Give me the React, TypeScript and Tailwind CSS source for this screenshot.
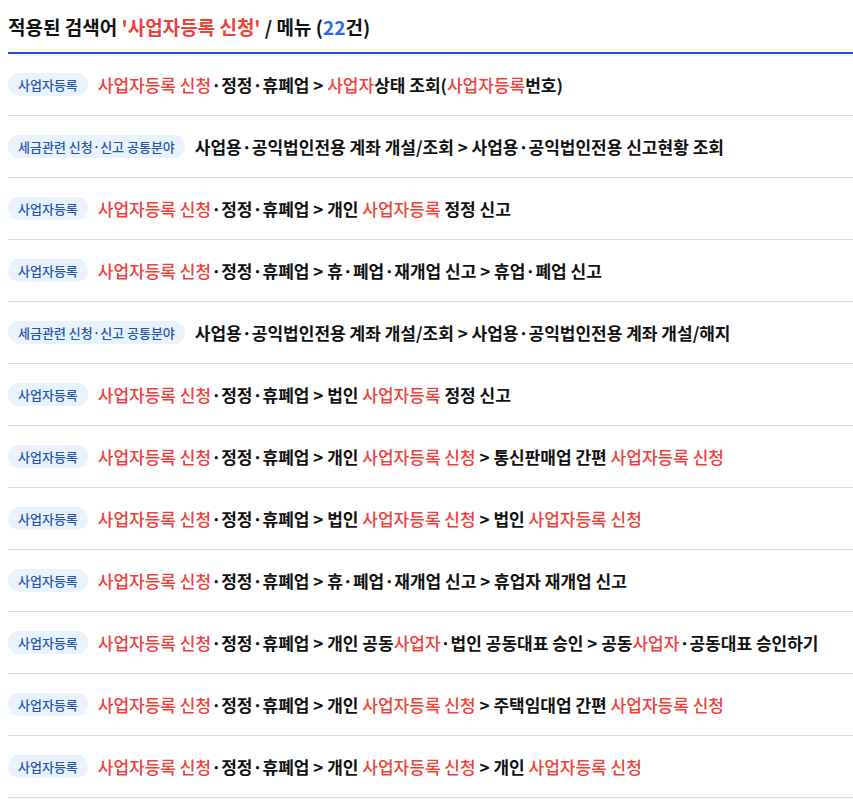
const A = '사업자등록';
const B = '세금관련 신청·신고 공통분야';

// [..] marks highlighted words
const rows: [string, string][] = [
  [A, '[사업자등록 신청]·정정·휴폐업 > [사업자]상태 조회([사업자등록]번호)'],
  [B, '사업용·공익법인전용 계좌 개설/조회 > 사업용·공익법인전용 신고현황 조회'],
  [A, '[사업자등록 신청]·정정·휴폐업 > 개인 [사업자등록] 정정 신고'],
  [A, '[사업자등록 신청]·정정·휴폐업 > 휴·폐업·재개업 신고 > 휴업·폐업 신고'],
  [B, '사업용·공익법인전용 계좌 개설/조회 > 사업용·공익법인전용 계좌 개설/해지'],
  [A, '[사업자등록 신청]·정정·휴폐업 > 법인 [사업자등록] 정정 신고'],
  [A, '[사업자등록 신청]·정정·휴폐업 > 개인 [사업자등록 신청] > 통신판매업 간편 [사업자등록 신청]'],
  [A, '[사업자등록 신청]·정정·휴폐업 > 법인 [사업자등록 신청] > 법인 [사업자등록 신청]'],
  [A, '[사업자등록 신청]·정정·휴폐업 > 휴·폐업·재개업 신고 > 휴업자 재개업 신고'],
  [A, '[사업자등록 신청]·정정·휴폐업 > 개인 공동[사업자]·법인 공동대표 승인 > 공동[사업자]·공동대표 승인하기'],
  [A, '[사업자등록 신청]·정정·휴폐업 > 개인 [사업자등록 신청] > 주택임대업 간편 [사업자등록 신청]'],
  [A, '[사업자등록 신청]·정정·휴폐업 > 개인 [사업자등록 신청] > 개인 [사업자등록 신청]'],
];

function Title({ text }: { text: string }) {
  const parts = text.split(/(\[[^\]]+\])/);
  return (
    <span className="text-[17px] font-semibold text-[#111]">
      {parts.map((p, i) =>
        p.startsWith('[') ? (
          <span key={i} className="text-[#f0403c] font-medium">{p.slice(1, -1)}</span>
        ) : (
          <span key={i}>{p}</span>
        )
      )}
    </span>
  );
}

export default function App() {
  return (
    <div className="bg-white pl-2 pt-[13px]" style={{ fontFamily: '"Noto Sans CJK KR", "Noto Sans", sans-serif' }}>
      <h2 className="text-[19px] font-bold text-[#111] leading-[28px] pb-[11px] border-b-2 border-[#1f52c8]">
        적용된 검색어 <span className="text-[#f0403c] font-semibold">'사업자등록 신청'</span> / 메뉴 (<span className="text-[#2a6ae8]">22</span>건)
      </h2>
      <ul>
        {rows.map(([tag, text], i) => (
          <li key={i} className="flex items-center h-[62px] border-b border-[#dcdcdc] gap-[10px]">
            <span className="rounded-full bg-[#eaf3fd] text-[#2356b0] text-[13px] leading-[23px] px-[10px] font-medium">
              {tag}
            </span>
            <Title text={text} />
          </li>
        ))}
      </ul>
    </div>
  );
}
